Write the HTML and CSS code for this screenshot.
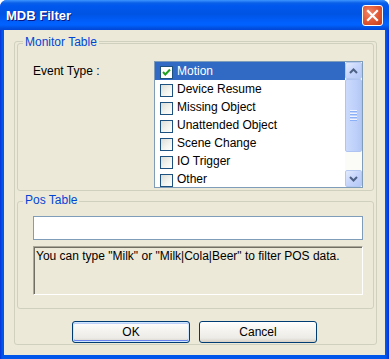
FILE: index.html
```html
<!DOCTYPE html>
<html lang="en">
<head>
<meta charset="utf-8"/>
<title>MDB Filter</title>
<link rel="stylesheet" href="styles.css">
</head>
<body>
<div class="window">
  <div class="titlebar">
    <span class="title">MDB Filter</span>
    <button class="close" aria-label="Close">
      <svg width="13" height="13" viewBox="0 0 13 13"><path d="M2 2 L11 11 M11 2 L2 11" stroke="#fff" stroke-width="2.2" stroke-linecap="square"/></svg>
    </button>
  </div>
  <div class="client">
    <div class="panel">
      <div class="group monitor">
        <span class="group-title">Monitor Table</span>
        <div class="event-row">
          <span class="field-label">Event Type :</span>
          <div class="listbox">
            <div class="items">
              <div class="item selected"><span class="check checked"><svg width="11" height="11" viewBox="0 0 11 11"><path d="M2 5 L4.3 7.5 L9 2.5" fill="none" stroke="#21a121" stroke-width="2"/></svg></span>Motion</div>
              <div class="item"><span class="check"></span>Device Resume</div>
              <div class="item"><span class="check"></span>Missing Object</div>
              <div class="item"><span class="check"></span>Unattended Object</div>
              <div class="item"><span class="check"></span>Scene Change</div>
              <div class="item"><span class="check"></span>IO Trigger</div>
              <div class="item"><span class="check"></span>Other</div>
            </div>
            <div class="scrollbar">
              <div class="sb-btn"><svg width="9" height="6" viewBox="0 0 9 6"><path d="M1 5 L4.5 1.5 L8 5" fill="none" stroke="#4d6185" stroke-width="2"/></svg></div>
              <div class="sb-thumb"><span></span><span></span><span></span><span></span></div>
              <div class="sb-track"></div>
              <div class="sb-btn"><svg width="9" height="6" viewBox="0 0 9 6"><path d="M1 1 L4.5 4.5 L8 1" fill="none" stroke="#4d6185" stroke-width="2"/></svg></div>
            </div>
          </div>
        </div>
      </div>
      <div class="group pos">
        <span class="group-title">Pos Table</span>
        <input class="textbox" type="text"/>
        <div class="hint">You can type "Milk" or "Milk|Cola|Beer" to filter POS data.</div>
      </div>
      <div class="buttons">
        <button class="btn default">OK</button>
        <button class="btn">Cancel</button>
      </div>
    </div>
  </div>
</div>
</body>
</html>
```
FILE: styles.css
```css
body {
  margin: 0;
  background: #ffffff;
  font-family: "Liberation Sans", Arial, sans-serif;
  font-size: 12px;
  color: #000;
}

.window {
  width: 389px;
  height: 359px;
  display: flex;
  flex-direction: column;
  background: linear-gradient(to right, #0831d9 0, #0055ea 2px, #0055ea 386px, #0831d9 389px);
  border-radius: 7px 7px 0 0;
  overflow: hidden;
}

.titlebar {
  flex: none;
  height: 30px;
  display: flex;
  align-items: center;
  justify-content: space-between;
  padding: 0 6px 0 6px;
  background: linear-gradient(to bottom, #3d95ff 0, #0a5fe8 3px, #0058ee 6px, #0054e3 14px, #0060fc 22px, #0062ff 25px, #0050e0 28px, #0046d8 30px);
}

.title {
  color: #ffffff;
  font-weight: bold;
  font-size: 13px;
  text-shadow: 1px 1px 0 #0a1883;
  margin-top: 1px;
}

.close {
  width: 21px;
  height: 21px;
  padding: 0;
  border: 1px solid #ffffff;
  border-radius: 3px;
  background: radial-gradient(circle at 35% 35%, #f0866a 0, #e25a35 50%, #c63a16 100%);
  display: flex;
  align-items: center;
  justify-content: center;
}

.client {
  flex: 1;
  margin: 0 4px 4px 4px;
  background: #ece9d8;
  padding: 11px 8px 10px 10px;
}

.panel {
  height: 100%;
  box-sizing: border-box;
  border: 1px solid #d0d0bf;
  border-radius: 3px;
  padding: 1px 2px 0 2px;
  display: flex;
  flex-direction: column;
}

.group {
  position: relative;
  border: 1px solid #d0d0bf;
  border-radius: 3px;
}

.group-title {
  position: absolute;
  top: -9px;
  left: 5px;
  padding: 0 2px;
  background: #ece9d8;
  color: #0046d5;
  line-height: 14px;
}

.monitor {
  height: 148px;
  box-sizing: border-box;
  padding: 18px 10px 0 15px;
}

.event-row {
  display: flex;
  gap: 0;
}

.field-label {
  width: 121px;
  margin-top: 2px;
}

.listbox {
  width: 207px;
  height: 125px;
  margin-top: -1px;
  border: 1px solid #7f9db9;
  background: #ffffff;
  display: flex;
  overflow: hidden;
}

.items {
  flex: 1;
}

.item {
  height: 18px;
  display: flex;
  align-items: center;
  padding-left: 5px;
  gap: 4px;
  white-space: nowrap;
}

.item.selected {
  background: #316ac5;
  color: #ffffff;
}

.check {
  width: 11px;
  height: 11px;
  margin-top: 3px;
  border: 1px solid #1c5180;
  background: linear-gradient(135deg, #dcdcd7 0, #f4f4f1 60%, #ffffff 100%);
  display: flex;
  align-items: center;
  justify-content: center;
  flex: none;
}

.check.checked {
  background: #ffffff;
}

.scrollbar {
  width: 17px;
  display: flex;
  flex-direction: column;
  background: #fbfbf8;
}

.sb-btn {
  height: 15px;
  border: 1px solid #b5c8f0;
  border-radius: 2px;
  background: linear-gradient(135deg, #e3ebfd 0, #c6d5fb 50%, #b4c8f6 100%);
  display: flex;
  align-items: center;
  justify-content: center;
  flex: none;
}

.sb-thumb {
  height: 71px;
  border: 1px solid #b0c4f2;
  border-radius: 2px;
  background: linear-gradient(to right, #cbdafc 0, #bfd1fa 60%, #b4c8f6 100%);
  display: flex;
  flex-direction: column;
  align-items: center;
  justify-content: center;
  gap: 1px;
  flex: none;
}

.sb-thumb span {
  width: 7px;
  height: 1px;
  background: #eef3fe;
  border-bottom: 1px solid #8cb0f8;
}

.sb-track {
  flex: 1;
}

.pos {
  margin-top: 10px;
  height: 108px;
  box-sizing: border-box;
  padding: 14px 10px 0 15px;
}

.textbox {
  display: block;
  width: 330px;
  height: 24px;
  box-sizing: border-box;
  border: 1px solid #7f9db9;
  background: #ffffff;
  margin: 0;
  padding: 0 3px;
  font: inherit;
}

.hint {
  margin-top: 6px;
  width: 330px;
  height: 49px;
  box-sizing: border-box;
  border: 1px solid;
  border-color: #aca899 #ffffff #ffffff #aca899;
  box-shadow: inset 1px 1px 0 #716f64;
  padding: 2px 2px;
  line-height: 14px;
}

.buttons {
  display: flex;
  justify-content: center;
  gap: 9px;
  margin-top: 12px;
  padding-right: 2px;
}

.btn {
  width: 118px;
  height: 22px;
  border: 1px solid #003c74;
  border-radius: 3px;
  background: linear-gradient(to bottom, #ffffff 0, #f5f4f0 40%, #ecebe6 80%, #d6d0c5 100%);
  font: inherit;
  color: #000;
  padding: 0;
}

.btn.default {
  box-shadow: inset 0 0 0 1px #cee7ff, inset 0 -1px 0 1px #6982ee, inset 0 1px 0 1px #bccff9;
}
```
